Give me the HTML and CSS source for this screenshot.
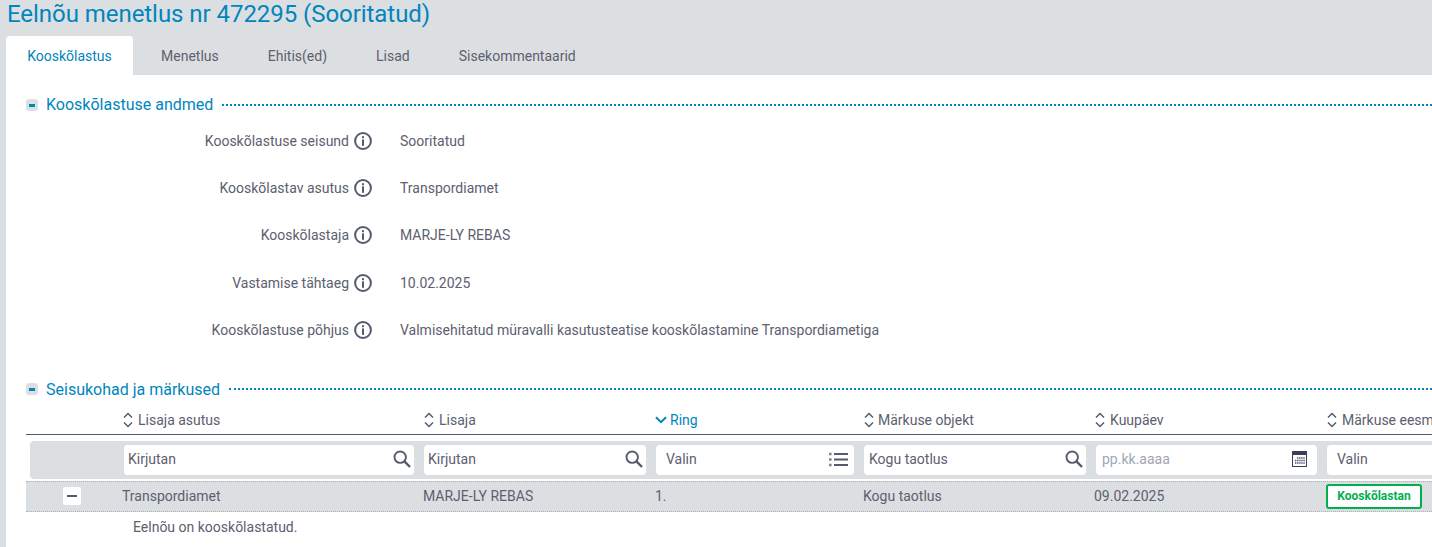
FILE: index.html

```html
<!DOCTYPE html>
<html lang="et">
<head>
  <meta charset="UTF-8">
  <meta name="viewport" content="width=device-width, initial-scale=1.0">
  <title>Eelnõu menetlus nr 472295</title>
  <link rel="stylesheet" href="styles.css">
</head>
<body>
  <svg class="icon-defs" width="0" height="0">
    <symbol id="i-info" viewBox="0 0 18 18">
      <circle cx="9" cy="9" r="7.9" fill="none" stroke="currentColor" stroke-width="2"/>
      <rect x="8" y="7.4" width="2" height="6.4" fill="currentColor"/>
      <rect x="8" y="4.2" width="2" height="2" fill="currentColor"/>
    </symbol>
    <symbol id="i-sort" viewBox="0 0 10 16">
      <path d="M1 5.5 5 1.5 9 5.5M1 10.5 5 14.5 9 10.5" fill="none" stroke="currentColor" stroke-width="1.5"/>
    </symbol>
    <symbol id="i-search" viewBox="0 0 18 18">
      <circle cx="7.2" cy="7.2" r="5.7" fill="none" stroke="currentColor" stroke-width="1.9"/>
      <path d="M11.4 11.4 17 17" fill="none" stroke="currentColor" stroke-width="2.4"/>
    </symbol>
  </svg>

  <h1 class="page-title">Eelnõu menetlus nr 472295 (Sooritatud)</h1>

  <nav class="tabs">
    <a class="tab tab-active">Kooskõlastus</a>
    <a class="tab">Menetlus</a>
    <a class="tab">Ehitis(ed)</a>
    <a class="tab">Lisad</a>
    <a class="tab">Sisekommentaarid</a>
  </nav>

  <main class="content">
    <div class="section-head">
      <span class="collapse-btn"></span>
      <h2>Kooskõlastuse andmed</h2>
      <span class="section-line"></span>
    </div>

    <div class="fields">
      <div class="field">
        <div class="field-label">Kooskõlastuse seisund <svg class="info"><use href="#i-info"/></svg></div>
        <div class="field-value">Sooritatud</div>
      </div>
      <div class="field">
        <div class="field-label">Kooskõlastav asutus <svg class="info"><use href="#i-info"/></svg></div>
        <div class="field-value">Transpordiamet</div>
      </div>
      <div class="field">
        <div class="field-label">Kooskõlastaja <svg class="info"><use href="#i-info"/></svg></div>
        <div class="field-value">MARJE-LY REBAS</div>
      </div>
      <div class="field">
        <div class="field-label">Vastamise tähtaeg <svg class="info"><use href="#i-info"/></svg></div>
        <div class="field-value">10.02.2025</div>
      </div>
      <div class="field">
        <div class="field-label">Kooskõlastuse põhjus <svg class="info"><use href="#i-info"/></svg></div>
        <div class="field-value">Valmisehitatud müravalli kasutusteatise kooskõlastamine Transpordiametiga</div>
      </div>
    </div>

    <div class="section-head section-head-second">
      <span class="collapse-btn"></span>
      <h2>Seisukohad ja märkused</h2>
      <span class="section-line"></span>
    </div>

    <div class="table">
      <div class="table-row table-head">
        <div></div>
        <div class="th"><svg class="sort"><use href="#i-sort"/></svg>Lisaja asutus</div>
        <div class="th"><svg class="sort"><use href="#i-sort"/></svg>Lisaja</div>
        <div class="th th-active">
          <svg class="sort-active" viewBox="0 0 12 8"><path d="M1 1.2 6 6.2 11 1.2" fill="none" stroke="currentColor" stroke-width="2"/></svg>Ring
        </div>
        <div class="th th-object"><svg class="sort"><use href="#i-sort"/></svg>Märkuse objekt</div>
        <div class="th"><svg class="sort"><use href="#i-sort"/></svg>Kuupäev</div>
        <div class="th"><svg class="sort"><use href="#i-sort"/></svg>Märkuse eesmärk</div>
      </div>

      <div class="filters">
        <div class="filter filter-1"><span>Kirjutan</span><svg class="search"><use href="#i-search"/></svg></div>
        <div class="filter filter-2"><span>Kirjutan</span><svg class="search"><use href="#i-search"/></svg></div>
        <div class="filter filter-3 filter-select">
          <span>Valin</span>
          <svg class="list" viewBox="0 0 19 15">
            <path d="M5 2h14M5 7.5h14M5 13h14" stroke="currentColor" stroke-width="2"/>
            <path d="M0 2h2.6M0 7.5h2.6M0 13h2.6" stroke="currentColor" stroke-width="2.4" opacity=".75"/>
          </svg>
        </div>
        <div class="filter filter-4"><span>Kogu taotlus</span><svg class="search"><use href="#i-search"/></svg></div>
        <div class="filter filter-5">
          <span class="placeholder">pp.kk.aaaa</span>
          <svg class="calendar" viewBox="0 0 15 16">
            <rect x=".5" y=".5" width="14" height="15" fill="#fff" stroke="#3a3f5a"/>
            <rect x="1" y="1" width="13" height="3" fill="#3a3f5a"/>
            <path d="M5 7h8M3 9.5h10M3 12h10" stroke="#4c5166" stroke-width="1.6" stroke-dasharray="1.4 .7"/>
          </svg>
        </div>
        <div class="filter filter-6 filter-select"><span>Valin</span></div>
      </div>

      <div class="table-row table-data">
        <div class="expand-cell"><span class="expand-btn"></span></div>
        <div>Transpordiamet</div>
        <div>MARJE-LY REBAS</div>
        <div>1.</div>
        <div>Kogu taotlus</div>
        <div>09.02.2025</div>
        <div><span class="status-badge">Kooskõlastan</span></div>
      </div>
      <div class="row-detail">Eelnõu on kooskõlastatud.</div>
    </div>
  </main>
</body>
</html>
```

FILE: styles.css

```css
html, body {
  height: 100%;
}

body {
  margin: 0;
  overflow: hidden;
  font-family: Roboto, "Liberation Sans", sans-serif;
  font-size: 14px;
  color: #5c6070;
  background: #dcdfe2;
}

.icon-defs {
  position: absolute;
}

.page-title {
  margin: 0;
  padding-left: 7px;
  height: 36px;
  font-size: 24px;
  line-height: 28px;
  font-weight: 400;
  letter-spacing: -0.05px;
  color: #0085bd;
  white-space: nowrap;
}

.tabs {
  display: flex;
  margin-left: 6px;
  height: 39px;
}

.tab {
  display: flex;
  align-items: center;
  justify-content: center;
  padding: 0 21px;
  margin-right: 7px;
  border-radius: 4px 4px 0 0;
}

.tab-active {
  width: 127px;
  box-sizing: border-box;
  margin-right: 0;
  background: #fff;
  color: #0085bd;
}

.tab:nth-child(2) { margin-left: 7px; }

.content {
  margin-left: 6px;
  height: 472px;
  padding: 20px 0 0 20px;
  box-sizing: border-box;
  background: #fff;
}

.section-head {
  display: flex;
  align-items: center;
  height: 19px;
}

.section-head-second {
  margin-top: 26px;
}

.section-head h2 {
  margin: 0 0 0 8px;
  font-size: 16px;
  font-weight: 400;
  color: #0085bd;
  white-space: nowrap;
}

.collapse-btn {
  position: relative;
  width: 12px;
  height: 12px;
  border-radius: 3px;
  background: #dcdfe2;
}

.collapse-btn::after {
  content: "";
  position: absolute;
  left: 3px;
  top: 5px;
  width: 6px;
  height: 3px;
  background: #0085bd;
}

.section-line {
  flex: 1;
  margin-left: 9px;
  border-top: 2px dotted #0085bd;
}

.fields {
  margin-top: 3px;
}

.field {
  display: flex;
  align-items: center;
  height: 47.4px;
}

.field-label {
  display: flex;
  align-items: center;
  justify-content: flex-end;
  gap: 5px;
  width: 346px;
}

.info {
  width: 18px;
  height: 18px;
  color: #555a70;
}

.field-value {
  margin-left: 28px;
}

.table {
  margin-top: 8px;
  width: 1500px;
}

.table-row {
  display: grid;
  grid-template-columns: 96px 301px 232px 208px 231px 232px 200px;
  align-items: center;
}

.table-head {
  height: 27px;
  border-bottom: 1px solid #555a70;
}

.th {
  display: flex;
  align-items: center;
  gap: 5px;
  padding-left: 1px;
  white-space: nowrap;
}

.th-active {
  gap: 3px;
  padding-left: 0;
  color: #0085bd;
}

.th-object {
  gap: 4px;
}

.sort {
  width: 10px;
  height: 16px;
  color: #555a70;
}

.sort-active {
  width: 12px;
  height: 8px;
}

.filters {
  display: flex;
  align-items: center;
  height: 38px;
  margin: 6px 0 2px 4px;
  padding-left: 94px;
  border-radius: 4px 0 0 4px;
  background: #dcdfe2;
}

.filter {
  display: flex;
  align-items: center;
  justify-content: space-between;
  box-sizing: border-box;
  flex: none;
  height: 30px;
  padding: 0 3px 1px 4px;
  margin-right: 10px;
  border-radius: 4px;
  background: #fff;
}

.filter-1 { width: 290px; }
.filter-2 { width: 222px; }
.filter-3 { width: 198px; }
.filter-4 { width: 222px; padding-left: 5px; }
.filter-5 { width: 221px; }
.filter-6 { width: 200px; }

.filter-select {
  padding-left: 10px;
}

.filter-5 {
  padding: 0 10px 1px 6px;
}

.placeholder {
  color: #a0a6b8;
}

.search {
  width: 18px;
  height: 18px;
  color: #555a70;
}

.list {
  width: 19px;
  height: 15px;
  margin-right: 3px;
  color: #555a70;
}

.calendar {
  width: 15px;
  height: 16px;
}

.table-data {
  height: 29px;
  background: #dcdfe2;
  border-top: 1px dotted #aeb2b8;
  border-bottom: 1px dotted #aeb2b8;
}

.expand-cell {
  padding-left: 37px;
  display: flex;
}

.expand-btn {
  position: relative;
  width: 18px;
  height: 18px;
  border-radius: 2px;
  background: #fff;
}

.expand-btn::after {
  content: "";
  position: absolute;
  left: 4px;
  top: 8px;
  width: 10px;
  height: 2px;
  background: #555a70;
}

.status-badge {
  display: block;
  box-sizing: border-box;
  width: 96px;
  height: 25px;
  line-height: 21px;
  text-align: center;
  font-size: 12px;
  font-weight: 700;
  color: #00b04f;
  background: #fff;
  border: 2px solid #00b04f;
  border-radius: 3px;
}

.row-detail {
  margin-top: 7px;
  padding-left: 107px;
  line-height: 17px;
}
```
